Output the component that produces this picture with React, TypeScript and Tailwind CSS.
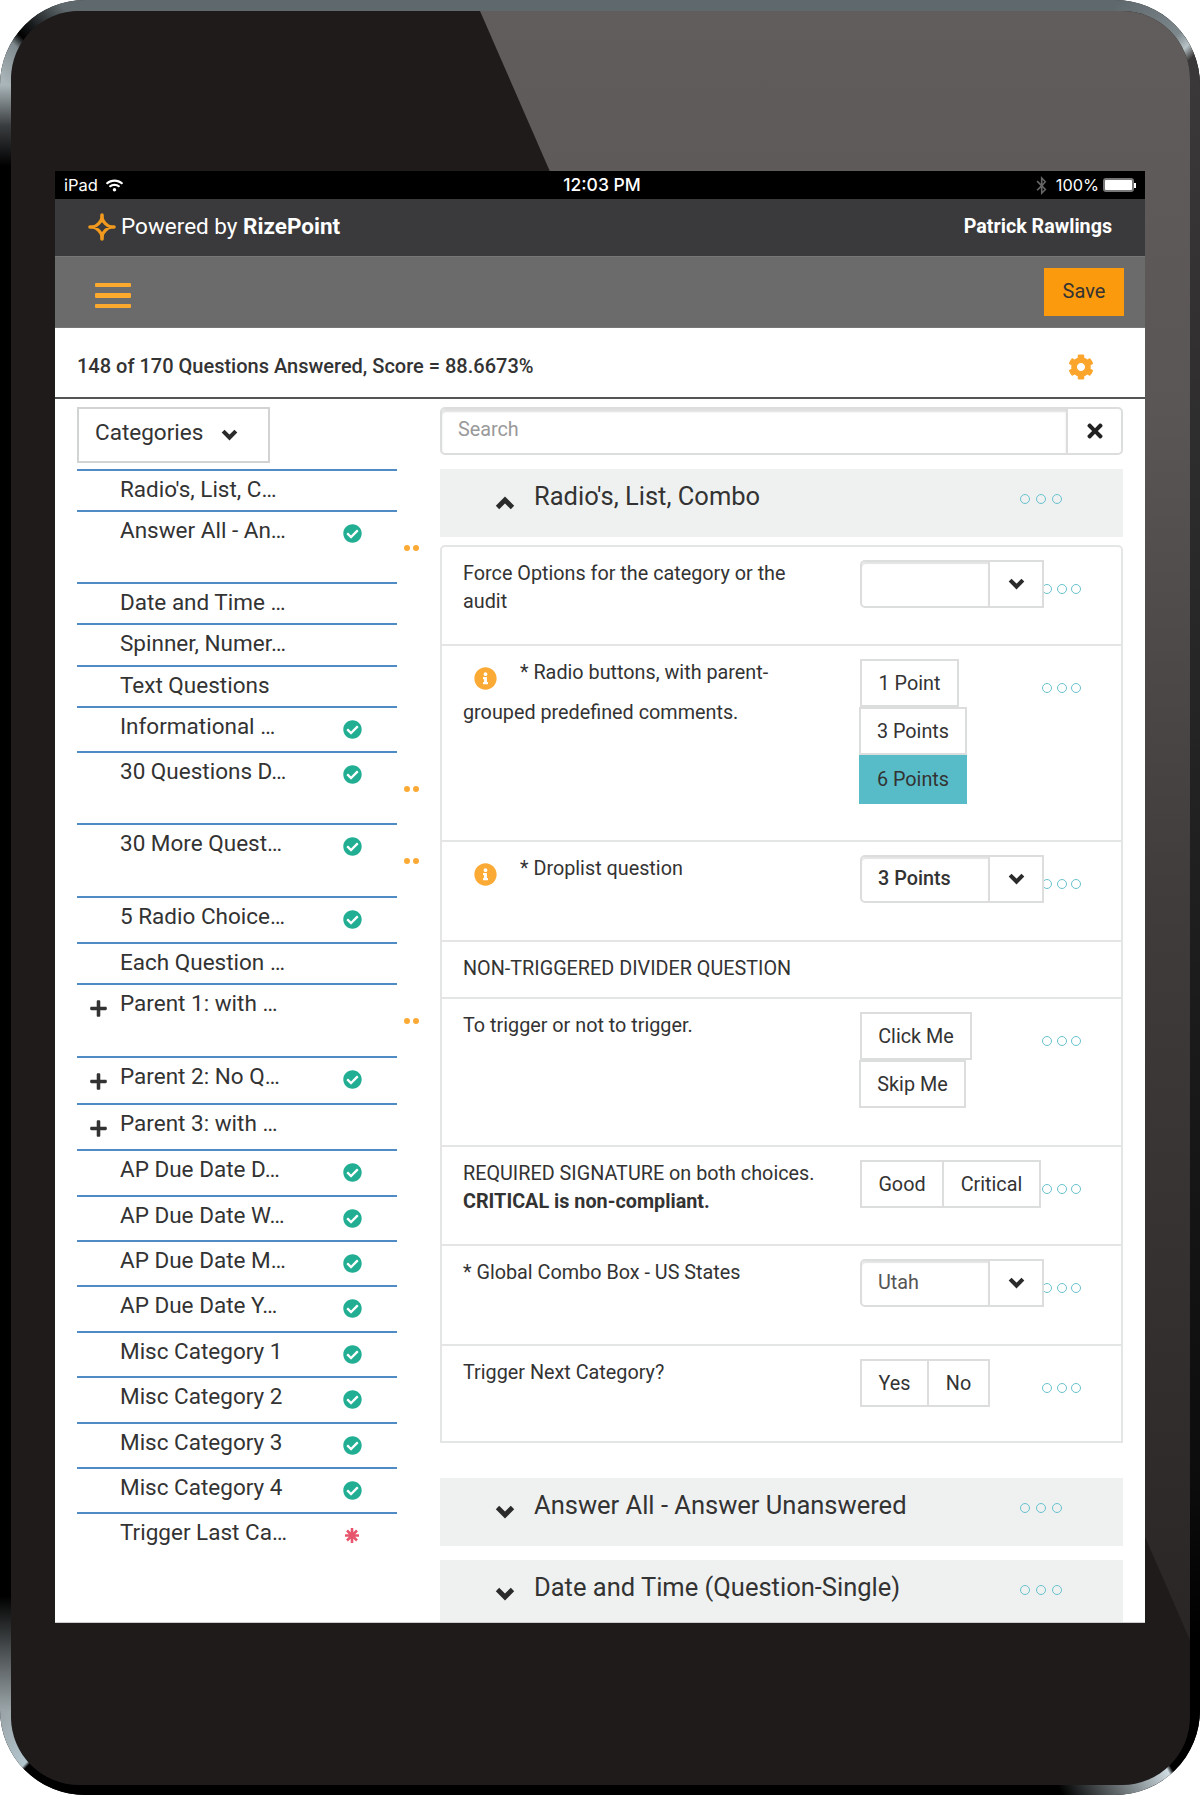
import React from 'react';
import { FaTimes, FaPlus, FaCog, FaCheckCircle, FaInfoCircle, FaWifi, FaBluetoothB } from 'react-icons/fa';

function DeviceFrame() {
  return (
    <svg className="absolute left-0 top-0" width="1200" height="1795" viewBox="0 0 1200 1795">
      <defs>
        <linearGradient id="tl" gradientUnits="userSpaceOnUse" x1="8" y1="85" x2="85" y2="6">
          <stop offset="0" stopColor="#a9b5b9" />
          <stop offset="0.3" stopColor="#7f8a8e" />
          <stop offset="0.4" stopColor="#000" />
          <stop offset="0.55" stopColor="#1a1d1e" />
          <stop offset="0.85" stopColor="#5f686c" />
        </linearGradient>
        <linearGradient id="tr" gradientUnits="userSpaceOnUse" x1="1115" y1="5" x2="1195" y2="90">
          <stop offset="0" stopColor="#5f686c" />
          <stop offset="0.55" stopColor="#7d888c" />
          <stop offset="0.68" stopColor="#b7c3c7" />
          <stop offset="0.78" stopColor="#3a3838" />
          <stop offset="1" stopColor="#3a3838" />
        </linearGradient>
        <linearGradient id="bl" gradientUnits="userSpaceOnUse" x1="5" y1="1710" x2="90" y2="1790">
          <stop offset="0" stopColor="#9aa4a8" />
          <stop offset="0.44" stopColor="#b4c6ce" />
          <stop offset="0.47" stopColor="#000" />
          <stop offset="1" stopColor="#000" />
        </linearGradient>
        <linearGradient id="br" gradientUnits="userSpaceOnUse" x1="1195" y1="1715" x2="1060" y2="1790">
          <stop offset="0" stopColor="#000" />
          <stop offset="0.3" stopColor="#000" />
          <stop offset="0.33" stopColor="#cfdce2" />
          <stop offset="0.55" stopColor="#8a9498" />
          <stop offset="1" stopColor="#000" />
        </linearGradient>
        <linearGradient id="left" gradientUnits="userSpaceOnUse" x1="0" y1="85" x2="0" y2="1710">
          <stop offset="0" stopColor="#a9b5b9" />
          <stop offset="0.025" stopColor="#3a3d3f" />
          <stop offset="0.05" stopColor="#000" />
          <stop offset="0.93" stopColor="#000" />
          <stop offset="1" stopColor="#9aa4a8" />
        </linearGradient>
        <linearGradient id="right" gradientUnits="userSpaceOnUse" x1="0" y1="85" x2="0" y2="1640">
          <stop offset="0" stopColor="#3a3838" />
          <stop offset="0.9" stopColor="#0c0c0c" />
          <stop offset="1" stopColor="#000" />
        </linearGradient>
        <linearGradient id="glare" gradientUnits="userSpaceOnUse" x1="0" y1="0" x2="0" y2="1640">
          <stop offset="0" stopColor="#625d5d" />
          <stop offset="0.25" stopColor="#5a5655" />
          <stop offset="0.55" stopColor="#403c3c" />
          <stop offset="1" stopColor="#2a2625" />
        </linearGradient>
        <clipPath id="innerClip">
          <rect x="11" y="11" width="1179" height="1774" rx="68" />
        </clipPath>
      </defs>
      <rect x="0" y="0" width="1200" height="1795" rx="85" fill="#000" />
      <rect x="85" y="0" width="1030" height="11" fill="#5f686c" />
      <rect x="0" y="85" width="11" height="1625" fill="url(#left)" />
      <rect x="1190" y="85" width="10" height="1625" fill="url(#right)" />
      <path d="M5.5 85 A79.5 79.5 0 0 1 85 5.5" fill="none" stroke="url(#tl)" strokeWidth="11" />
      <path d="M1115 5.5 A79.5 79.5 0 0 1 1194.5 85" fill="none" stroke="url(#tr)" strokeWidth="11" />
      <path d="M5.5 1710 A79.5 79.5 0 0 0 85 1789.5" fill="none" stroke="url(#bl)" strokeWidth="11" />
      <path d="M1194.5 1710 A79.5 79.5 0 0 1 1115 1789.5 L1050 1789.5" fill="none" stroke="url(#br)" strokeWidth="11" />
      <rect x="11" y="11" width="1179" height="1774" rx="68" fill="#1f1b1b" />
      <g clipPath="url(#innerClip)">
        <polygon points="480,11 1190,11 1190,1640" fill="url(#glare)" />
      </g>
    </svg>
  );
}

function Logo() {
  return (
    <svg width="28" height="28" viewBox="0 0 28 28" fill="none" stroke="#f29a1e" strokeLinecap="round">
      <path d="M14 5 C15 9 19 13 23 14 C19 15 15 19 14 23 C13 19 9 15 5 14 C9 13 13 9 14 5Z" strokeWidth="3.2" />
      <path d="M14 2V5M14 23V26M2 14H5M23 14H26" strokeWidth="3.6" />
    </svg>
  );
}

function Burst() {
  return (
    <svg width="14" height="15" viewBox="0 0 14 15" fill="none" stroke="#e8566e" strokeWidth="2.6">
      <path d="M7 0V15M0 7.5H14M2 2.5L12 12.5M12 2.5L2 12.5" />
    </svg>
  );
}

function Chev({ up, w, h }: { up?: boolean; w: number; h: number }) {
  return (
    <svg width={w} height={h} viewBox="0 0 20 14" fill="none" stroke="#2b2b2b" strokeWidth="4.8" preserveAspectRatio="none">
      <path d={up ? 'M2.5 11.5 L10 4 L17.5 11.5' : 'M2.5 2.5 L10 10 L17.5 2.5'} />
    </svg>
  );
}

function Rings({ tight }: { tight?: boolean }) {
  return (
    <div className={`flex ${tight ? 'gap-[4.7px]' : 'gap-[6px]'}`}>
      <span className="h-[10px] w-[10px] rounded-full border-[1.5px] border-[#68c2ce]" />
      <span className="h-[10px] w-[10px] rounded-full border-[1.5px] border-[#68c2ce]" />
      <span className="h-[10px] w-[10px] rounded-full border-[1.5px] border-[#68c2ce]" />
    </div>
  );
}

type Cat = { t: string; h: string; check?: boolean; dots?: boolean; plus?: boolean; burst?: boolean };
const cats: Cat[] = [
  { t: "Radio's, List, C…", h: 'h-[41px]' },
  { t: 'Answer All - An…', h: 'h-[72px]', check: true, dots: true },
  { t: 'Date and Time …', h: 'h-[41px]' },
  { t: 'Spinner, Numer…', h: 'h-[42px]' },
  { t: 'Text Questions', h: 'h-[41px]' },
  { t: 'Informational …', h: 'h-[45px]', check: true },
  { t: '30 Questions D…', h: 'h-[72px]', check: true, dots: true },
  { t: '30 More Quest…', h: 'h-[73px]', check: true, dots: true },
  { t: '5 Radio Choice…', h: 'h-[46px]', check: true },
  { t: 'Each Question …', h: 'h-[41px]' },
  { t: 'Parent 1: with …', h: 'h-[73px]', plus: true, dots: true },
  { t: 'Parent 2: No Q…', h: 'h-[47px]', plus: true, check: true },
  { t: 'Parent 3: with …', h: 'h-[46px]', plus: true },
  { t: 'AP Due Date D…', h: 'h-[46px]', check: true },
  { t: 'AP Due Date W…', h: 'h-[45px]', check: true },
  { t: 'AP Due Date M…', h: 'h-[45px]', check: true },
  { t: 'AP Due Date Y…', h: 'h-[46px]', check: true },
  { t: 'Misc Category 1', h: 'h-[45px]', check: true },
  { t: 'Misc Category 2', h: 'h-[46px]', check: true },
  { t: 'Misc Category 3', h: 'h-[45px]', check: true },
  { t: 'Misc Category 4', h: 'h-[45px]', check: true },
  { t: 'Trigger Last Ca…', h: 'h-[45px]', burst: true },
];

function CatRow({ c }: { c: Cat }) {
  return (
    <div className={`relative flex border-t-2 border-[#4f8bc4] ${c.h}`}>
      <div className="flex w-[43px] shrink-0 justify-center pt-[14px]">
        {c.plus ? <FaPlus className="text-[#333]" size={19} /> : null}
      </div>
      <div className="flex-1 whitespace-nowrap pt-[2px] text-[22.5px] leading-[33px] text-[#333]">{c.t}</div>
      <div className="flex w-[55px] shrink-0 justify-center pr-[35px] pt-[12px]">
        {c.check ? <FaCheckCircle className="text-[#22ae93]" size={19} /> : null}
        {c.burst ? <span className="pt-[2px]"><Burst /></span> : null}
      </div>
      {c.dots ? (
        <div className="absolute left-[327px] top-[33px] flex gap-[3px]">
          <span className="h-[6px] w-[6px] rounded-full bg-[#fbaa35]" />
          <span className="h-[6px] w-[6px] rounded-full bg-[#fbaa35]" />
        </div>
      ) : null}
    </div>
  );
}

function Accordion({ title, up }: { title: string; up?: boolean }) {
  return (
    <div className="flex h-[68px] shrink-0 bg-[#eff1f1]">
      <div className="w-[94px] shrink-0 pl-[55px] pt-[27px]">
        <Chev up={up} w={20} h={14} />
      </div>
      <div className="flex-1 pt-[9px] text-[25.5px] leading-[36px] text-[#333]">{title}</div>
      <div className="w-[103px] shrink-0 pt-[25px]"><Rings /></div>
    </div>
  );
}

function Row({ h, top, label, ctrl }: { h: string; top?: boolean; label: React.ReactNode; ctrl?: React.ReactNode }) {
  return (
    <div className={`grid grid-cols-[418px_182px_1fr] ${h} ${top ? '' : 'border-t-2 border-[#e4e5e5]'}`}>
      <div className="pl-[21px] pr-[35px]">{label}</div>
      <div className="relative z-10 pt-[13px]">{ctrl}</div>
      <div className="pt-[37px]">{ctrl ? <Rings tight /> : null}</div>
    </div>
  );
}

function Plain({ children }: { children: React.ReactNode }) {
  return <div className="pt-[13px] text-[19.8px] leading-[28px] text-[#333]">{children}</div>;
}

function InfoLabel({ children }: { children: React.ReactNode }) {
  return (
    <div className="pt-[7px] text-[19.8px] leading-[40px] text-[#333]">
      <FaInfoCircle className="ml-[11px] mr-[23px] inline-block align-[-11px] text-[#fbaa35]" size={23} />
      {children}
    </div>
  );
}

function Dropdown({ children, muted }: { children?: React.ReactNode; muted?: boolean }) {
  return (
    <div className="flex h-[48px] w-[184px] rounded-l-[5px] border-2 border-[#dcdddd] bg-white">
      <div className={`w-[126px] rounded-tl-[4px] pl-[16px] text-[19.8px] leading-[44px] shadow-[inset_0_2px_1px_#e4e4e4] ${muted ? 'text-[#555]' : 'font-medium text-[#333]'}`}>{children}</div>
      <div className="flex flex-1 items-center justify-center border-l-2 border-[#dcdddd]">
        <Chev w={17} h={12} />
      </div>
    </div>
  );
}

function Btn({ children, w }: { children: React.ReactNode; w: string }) {
  return (
    <div className={`flex h-[48px] items-center justify-center border-2 border-[#dcdddd] bg-white pt-[1px] text-[19.8px] text-[#333] ${w}`}>{children}</div>
  );
}

export default function App() {
  return (
    <div className="relative h-[1795px] w-[1200px] overflow-hidden bg-white font-['Roboto',sans-serif]">
      <DeviceFrame />
      <div className="relative ml-[55px] mt-[171px] flex h-[1452px] w-[1090px] flex-col overflow-hidden border-b border-[#ccc] bg-white">
        <div className="flex h-[28px] shrink-0 items-center justify-between bg-black px-[9px] font-['Inter',sans-serif] text-white">
          <div className="flex w-[200px] items-center gap-[8px] text-[16.5px]">
            <span>iPad</span>
            <FaWifi size={17} />
          </div>
          <span className="ml-[4px] text-[17.5px] font-medium">12:03 PM</span>
          <div className="flex w-[200px] items-center justify-end gap-[4px] text-[16.3px]">
            <FaBluetoothB className="mr-[1px] text-[#666]" size={19} />
            <span>100%</span>
            <div className="h-[14px] w-[31px] rounded-[3px] border-2 border-[#777] bg-white" />
            <div className="-ml-[4px] h-[5px] w-[2px] bg-white" />
          </div>
        </div>
        <div className="flex h-[57px] shrink-0 items-center justify-between bg-[#3a3a3c] pb-[2px] pl-[33px] pr-[33px]">
          <div className="flex items-center gap-[5px] text-[22.5px] text-white">
            <Logo />
            <span>Powered by <span className="font-bold">RizePoint</span></span>
          </div>
          <span className="text-[19.7px] font-bold text-white">Patrick Rawlings</span>
        </div>
        <div className="flex h-[72px] shrink-0 items-center justify-between border-y border-[#777] bg-[#6b6b6b] pl-[40px] pr-[21px]">
          <div className="flex w-[36px] flex-col gap-[6px] pt-[7px]">
            <span className="h-[4.5px] rounded-[1px] bg-[#fcaa2e]" />
            <span className="h-[4.5px] rounded-[1px] bg-[#fcaa2e]" />
            <span className="h-[4.5px] rounded-[1px] bg-[#fcaa2e]" />
          </div>
          <div className="flex h-[48px] w-[80px] items-center justify-center bg-[#fb9a0d] pb-[2px] text-[20px] text-[#333]">Save</div>
        </div>
        <div className="flex h-[71px] shrink-0 items-center justify-between border-b-2 border-[#555] pl-[22px] pr-[51px]">
          <span className="pt-[6px] text-[20px] font-medium text-[#333]">148 of 170 Questions Answered, Score = 88.6673%</span>
          <FaCog className="mt-[8px] text-[#fba52d]" size={26} />
        </div>
        <div className="flex min-h-0 flex-1">
          <div className="w-[385px] shrink-0 pl-[22px] pr-[43px] pt-[8px]">
            <div className="mb-[6px] flex h-[56px] w-[193px] border-2 border-[#d2d3d3] pl-[16px] pt-[7px] text-[22.5px] leading-[32px] text-[#333]">
              <span>Categories</span>
              <div className="ml-[18px] mt-[13px]"><Chev w={17} h={12} /></div>
            </div>
            {cats.map((c) => <CatRow key={c.t} c={c} />)}
          </div>
          <div className="flex w-[683px] shrink-0 flex-col pt-[8px]">
            <div className="flex h-[48px] shrink-0 rounded-[5px] border-2 border-[#dcdddd]">
              <div className="flex-1 rounded-tl-[4px] pl-[16px] text-[19.8px] leading-[42px] text-[#999] shadow-[inset_0_3px_2px_#e0e0e0]">Search</div>
              <div className="flex w-[55px] items-center justify-center border-l-2 border-[#dcdddd]">
                <FaTimes className="text-[#222]" size={22} />
              </div>
            </div>
            <div className="mt-[14px]"><Accordion title="Radio's, List, Combo" up /></div>
            <div className="mt-[8px] flex shrink-0 flex-col rounded-t-[5px] border-2 border-[#e4e5e5]">
              <Row h="h-[97px]" top label={<Plain>Force Options for the category or the audit</Plain>} ctrl={<Dropdown />} />
              <Row h="h-[196px]" label={<InfoLabel>* Radio buttons, with parent-grouped predefined comments.</InfoLabel>} ctrl={
                <div className="flex flex-col">
                  <Btn w="w-[99px]">1 Point</Btn>
                  <Btn w="w-[108px] -ml-px">3 Points</Btn>
                  <div className="-ml-px flex h-[49px] w-[108px] items-center justify-center bg-[#58bcc8] text-[19.8px] text-[#333]">6 Points</div>
                </div>
              } />
              <Row h="h-[100px]" label={<InfoLabel>* Droplist question</InfoLabel>} ctrl={<Dropdown>3 Points</Dropdown>} />
              <Row h="h-[57px]" label={<Plain>NON-TRIGGERED DIVIDER QUESTION</Plain>} />
              <Row h="h-[148px]" label={<Plain>To trigger or not to trigger.</Plain>} ctrl={
                <div className="flex flex-col">
                  <Btn w="w-[112px]">Click Me</Btn>
                  <Btn w="w-[107px] -ml-px">Skip Me</Btn>
                </div>
              } />
              <Row h="h-[99px]" label={<Plain>REQUIRED SIGNATURE on both choices. <b className="font-bold">CRITICAL is non-compliant.</b></Plain>} ctrl={
                <div className="flex">
                  <Btn w="w-[84px]">Good</Btn>
                  <Btn w="w-[99px] -ml-[2px]">Critical</Btn>
                </div>
              } />
              <Row h="h-[100px]" label={<Plain>* Global Combo Box - US States</Plain>} ctrl={<Dropdown muted>Utah</Dropdown>} />
              <Row h="h-[97px]" label={<Plain>Trigger Next Category?</Plain>} ctrl={
                <div className="flex">
                  <Btn w="w-[69px]">Yes</Btn>
                  <Btn w="w-[63px] -ml-[2px]">No</Btn>
                </div>
              } />
            </div>
            <div className="mt-[35px]"><Accordion title="Answer All - Answer Unanswered" /></div>
            <div className="mt-[14px]"><Accordion title="Date and Time (Question-Single)" /></div>
          </div>
        </div>
      </div>
    </div>
  );
}
